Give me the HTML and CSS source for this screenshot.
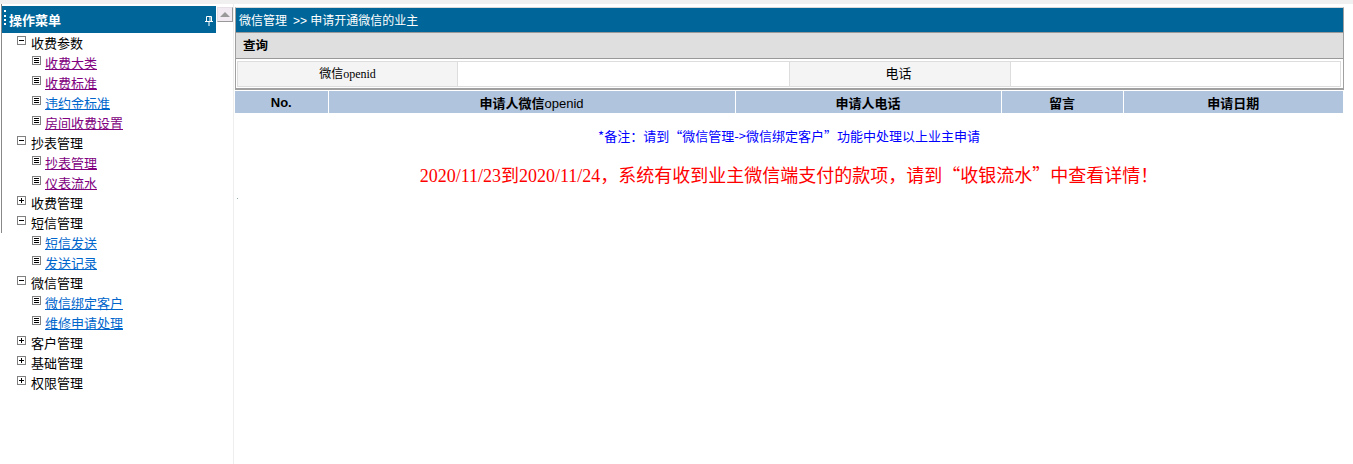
FILE: index.html
```html
<!DOCTYPE html>
<html lang="zh-CN">
<head>
    <meta charset="UTF-8">
    <title>申请开通微信的业主</title>
    <link rel="stylesheet" href="styles.css">
</head>
<body>
    <div class="topStrip"></div>
    <div class="page">
        <div class="side">
            <div class="menuPane">
                <div class="menuHead">
                    <span class="grip"></span>
                    <span class="menuTitle">操作菜单</span>
                    <svg class="pin" width="8" height="10" viewBox="0 0 8 10"><path d="M1.5 .5h5v5h-5zM5 .5v5M0 5.500h8M4 5.500v4.500" fill="none" stroke="#fff"/></svg>
                </div>
                <ul class="tree">
                    <li class="node"><span class="box minus"></span>收费参数</li>
                    <li class="leaf"><span class="box doc"></span><a class="seen" href="#">收费大类</a></li>
                    <li class="leaf"><span class="box doc"></span><a class="seen" href="#">收费标准</a></li>
                    <li class="leaf"><span class="box doc"></span><a href="#">违约金标准</a></li>
                    <li class="leaf"><span class="box doc"></span><a class="seen" href="#">房间收费设置</a></li>
                    <li class="node"><span class="box minus"></span>抄表管理</li>
                    <li class="leaf"><span class="box doc"></span><a class="seen" href="#">抄表管理</a></li>
                    <li class="leaf"><span class="box doc"></span><a class="seen" href="#">仪表流水</a></li>
                    <li class="node"><span class="box plus"></span>收费管理</li>
                    <li class="node"><span class="box minus"></span>短信管理</li>
                    <li class="leaf"><span class="box doc"></span><a href="#">短信发送</a></li>
                    <li class="leaf"><span class="box doc"></span><a href="#">发送记录</a></li>
                    <li class="node"><span class="box minus"></span>微信管理</li>
                    <li class="leaf"><span class="box doc"></span><a href="#">微信绑定客户</a></li>
                    <li class="leaf"><span class="box doc"></span><a href="#">维修申请处理</a></li>
                    <li class="node"><span class="box plus"></span>客户管理</li>
                    <li class="node"><span class="box plus"></span>基础管理</li>
                    <li class="node"><span class="box plus"></span>权限管理</li>
                </ul>
            </div>
            <div class="scrollUp"><span class="arrow"></span></div>
        </div>

        <div class="main">
            <div class="frame">
                <div class="crumb"><span>微信管理</span><span class="crumbSub">&gt;&gt; 申请开通微信的业主</span></div>
                <div class="queryHead">查询</div>
                <div class="queryWrap">
                    <table class="queryTable">
                        <colgroup>
                            <col class="qLabel1"><col class="qInput1"><col class="qLabel2"><col>
                        </colgroup>
                        <tr>
                            <td class="label">微信<span class="latin">openid</span></td>
                            <td></td>
                            <td class="label phone">电话</td>
                            <td></td>
                        </tr>
                    </table>
                </div>
            </div>
            <table class="listTable">
                <colgroup>
                    <col class="c1"><col class="c2"><col class="c3"><col class="c4"><col>
                </colgroup>
                <tr>
                    <th>No.</th>
                    <th>申请人微信<span class="thin">openid</span></th>
                    <th>申请人电话</th>
                    <th>留言</th>
                    <th>申请日期</th>
                </tr>
            </table>
            <p class="note">*备注：请到“微信管理-&gt;微信绑定客户”功能中处理以上业主申请</p>
            <p class="alert"><span class="num">2020/11/23</span>到<span class="num">2020/11/24</span>，系统有收到业主微信端支付的款项，请到“收银流水”中查看详情！</p>
            <div class="dot"></div>
        </div>
    </div>
</body>
</html>
```

FILE: styles.css
```css
html, body {
    margin: 0;
    padding: 0;
    height: 100%;
    overflow: hidden;
    background: #fff;
    font-family: "Liberation Sans", "Noto Sans CJK SC", sans-serif;
    font-size: 13px;
    color: #000;
}
.topStrip {
    height: 4px;
    background: #f0f0f0;
}
.page {
    display: flex;
    height: 460px;
}

/* left menu */
.side {
    width: 233px;
    flex: none;
    display: flex;
    align-items: flex-start;
    border-right: 1px solid #eee;
    box-sizing: content-box;
}
.menuPane {
    width: 214px;
    height: 229px;
    margin-left: 1px;
    border-left: 1px solid #888;
}
.menuHead {
    display: flex;
    align-items: center;
    height: 27px;
    margin-top: 2px;
    background: #006699;
    color: #fff;
}
.grip {
    width: 0;
    height: 15px;
    margin-left: 2px;
    margin-bottom: 4px;
    border-left: 2px dotted #fff;
}
.menuTitle {
    margin-left: 3px;
    font-weight: bold;
    font-size: 13px;
}
.pin {
    margin-left: auto;
    margin-right: 3px;
    margin-top: 3px;
}
.tree {
    list-style: none;
    margin: 0;
    padding: 0;
    width: 232px;
}
.tree li {
    display: flex;
    height: 20px;
    line-height: 22px;
    white-space: nowrap;
}
.node {
    padding-left: 15px;
}
.leaf {
    padding-left: 30px;
}
.box {
    position: relative;
    flex: none;
    box-sizing: border-box;
    width: 9px;
    height: 9px;
    margin-top: 3px;
    margin-right: 5px;
    border: 1px solid #808080;
    background: #fff;
}
.leaf .box {
    margin-right: 4px;
}
.minus::before, .plus::before {
    content: "";
    position: absolute;
    left: 1px;
    top: 3px;
    width: 5px;
    height: 1px;
    background: #000;
}
.plus::after {
    content: "";
    position: absolute;
    left: 3px;
    top: 1px;
    width: 1px;
    height: 5px;
    background: #000;
}
.doc::before {
    content: "";
    position: absolute;
    left: 1px;
    top: 1px;
    width: 5px;
    height: 5px;
    background: repeating-linear-gradient(#000 0 1px, #fff 1px 2px);
}
.tree a {
    color: #0066cc;
    text-decoration: underline;
}
.tree a.seen {
    color: #800080;
}
.scrollUp {
    box-sizing: border-box;
    display: flex;
    align-items: center;
    justify-content: center;
    width: 16px;
    height: 15px;
    margin-left: 1px;
    margin-top: 3px;
    background: #f1eaf3;
    border: 1px solid #e6e0e6;
    border-right-color: #999;
    border-bottom-color: #999;
}
.arrow {
    width: 0;
    height: 0;
    border-left: 5px solid transparent;
    border-right: 5px solid transparent;
    border-bottom: 5px solid #999;
}

/* right content */
.main {
    flex: 1;
    padding: 3px 9px 0 1px;
    min-width: 0;
}
.frame {
    border: 1px solid #a0a0a0;
    border-bottom: 2px solid #a0a0a0;
    border-top: 1px solid #d8d8d8;
}
.crumb {
    height: 24px;
    line-height: 26px;
    background: #006699;
    color: #fff;
    font-size: 12px;
    padding-left: 3px;
    border-bottom: 1px solid #999;
}
.crumbSub {
    margin-left: 6px;
}
.queryHead {
    height: 25px;
    line-height: 27px;
    background: #dfdfdf;
    font-weight: bold;
    font-size: 12.500px;
    padding-left: 7px;
    border-bottom: 1px solid #999;
}
.queryWrap {
    padding: 2px 2px 1px 1px;
}
.queryTable {
    width: 100%;
    table-layout: fixed;
    border-collapse: collapse;
}
.queryTable td {
    padding: 0 0 3px;
    height: 25px;
    box-sizing: border-box;
    border: 1px solid #ddd;
    font-size: 12px;
    text-align: center;
    background: #fff;
}
.queryTable td.label {
    background: #f4f4f4;
}
.queryTable td.phone {
    font-size: 13px;
    padding-right: 3px;
}
.qLabel1 { width: 220px; }
.qInput1 { width: 332px; }
.qLabel2 { width: 221px; }
.latin {
    font-family: "Liberation Serif", serif;
    font-size: 12px;
}
.listTable {
    width: 1108px;
    table-layout: fixed;
    border-collapse: collapse;
    margin-top: 1px;
}
.listTable th {
    height: 22px;
    padding: 0;
    background: #b0c4de;
    font-size: 13px;
    font-weight: bold;
    text-align: center;
    border-left: 1px solid #fff;
}
.listTable th:first-child {
    border-left: 0;
}
.c1 { width: 93px; }
.c2 { width: 407px; }
.c3 { width: 266px; }
.c4 { width: 122px; }
.thin {
    font-weight: normal;
    font-size: 13px;
}
.note {
    margin: 15px 0 0;
    width: 1108px;
    text-align: center;
    color: #0000ff;
    font-family: "Noto Sans CJK SC", sans-serif;
    font-size: 13px;
    line-height: 16px;
}
.alert {
    margin: 19px 0 0;
    width: 1108px;
    text-align: center;
    color: #ff0000;
    font-family: "Noto Sans CJK SC", serif;
    font-size: 18px;
    line-height: 22px;
}
.num {
    font-family: "Liberation Serif", serif;
}
.dot {
    width: 1px;
    height: 1px;
    margin: 11px 0 0 2px;
    background: #8fae9f;
}
```
